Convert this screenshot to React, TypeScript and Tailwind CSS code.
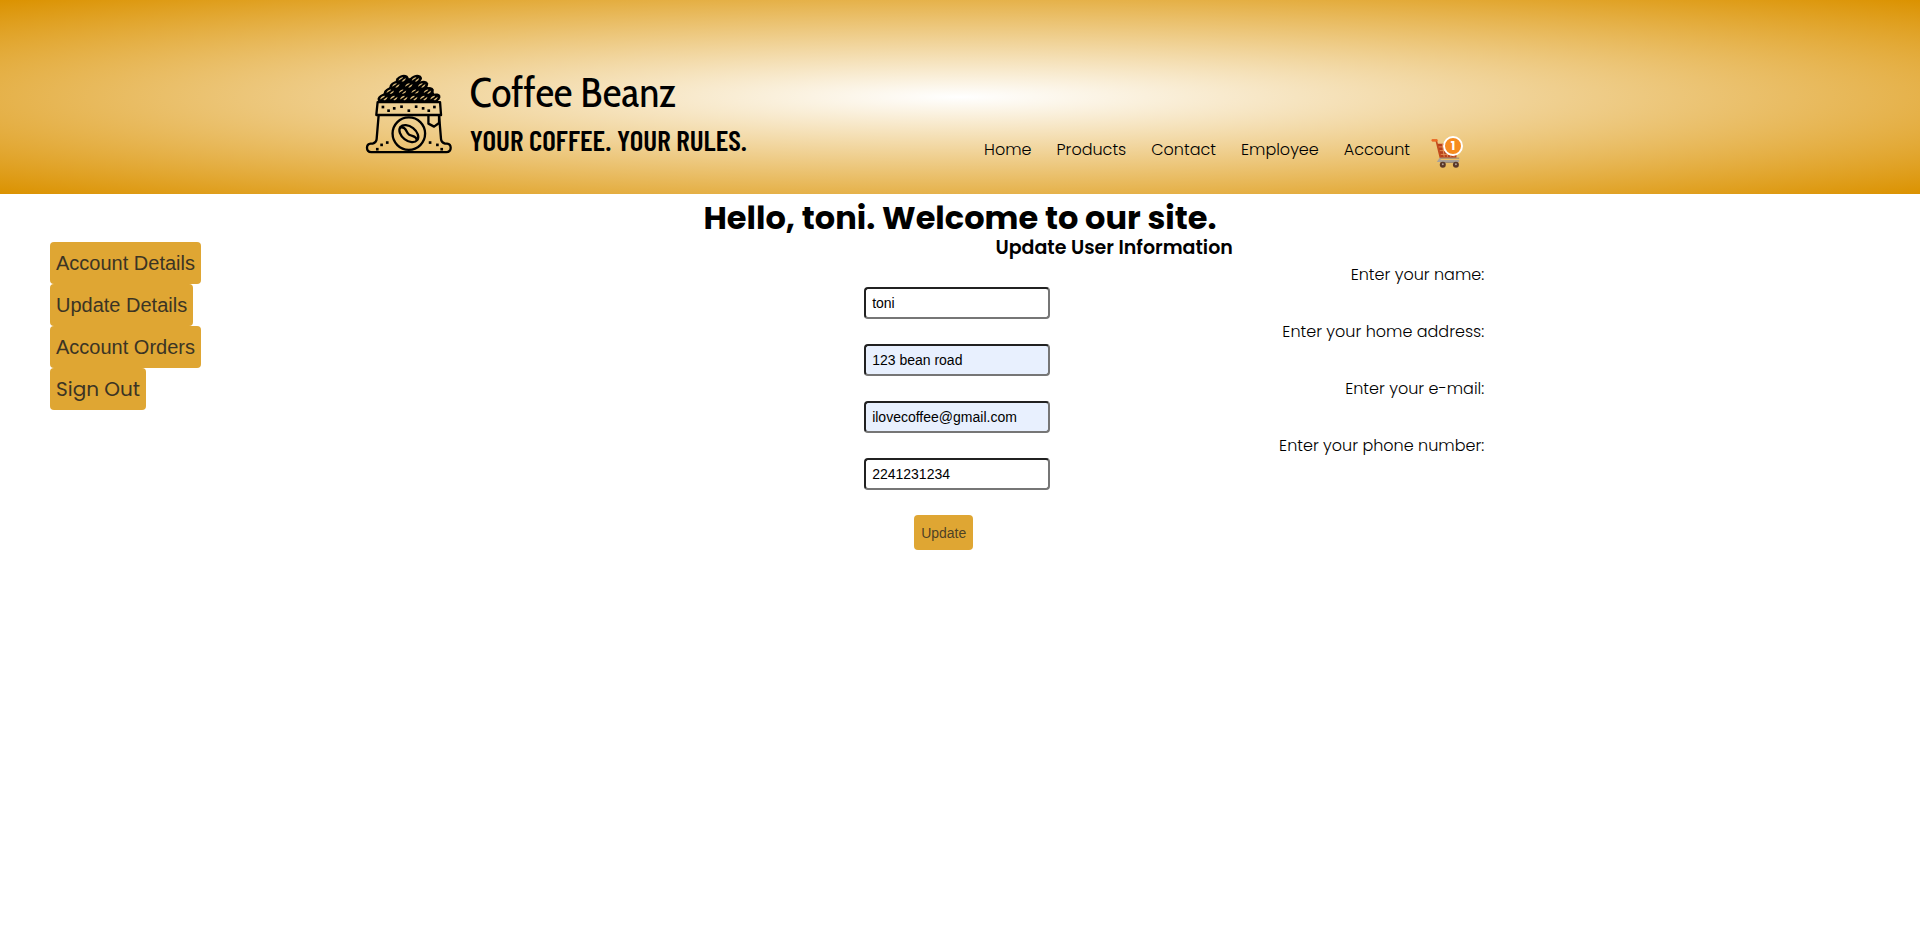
const beans: [number, number][] = [
  [130, 38], [170, 38],
  [111, 56], [150, 56], [189, 56],
  [94, 75], [131, 75], [169, 75], [206, 75],
  [75, 94], [105, 94], [135, 94], [165, 94], [195, 94], [226, 94],
];

const specks: [number, number][] = [
  [72, 121], [89, 132], [106, 125], [128, 120], [150, 132], [172, 120], [193, 125], [210, 132], [227, 121],
  [85, 228], [68, 235], [55, 248], [214, 228], [236, 235], [249, 248],
];

function CoffeeSack() {
  return (
    <svg viewBox="18 22 262 240" className="h-20 w-[87px] shrink-0" fill="none" stroke="#000" strokeWidth="7" strokeLinejoin="round" strokeLinecap="round" aria-hidden="true">
      <path d="M60 106L78 72L110 48L130 34H170L190 48L222 72L240 106Z" fill="#000" stroke="none" />
      {beans.map(([x, y]) => (
        <g key={`${x}-${y}`} transform={`translate(${x} ${y}) rotate(-20)`}>
          <ellipse rx="20" ry="13" fill="#000" stroke="none" />
          <path d="M-12 0Q-8 -7 3 -6Q7 -5 2 -3Q-5 -1 -12 0ZM-4 5Q3 1 12 0Q9 6 1 7Z" fill="#d9ba7b" stroke="none" />
        </g>
      ))}
      <path d="M56 106H244L247 145H52Z" />
      <path d="M59 147L53 218Q52 229 41 231H35Q24 232 24 244Q24 257 37 257H263Q276 257 276 244Q276 232 265 231H259Q248 229 247 218L241 147" />
      <path d="M209 147V171L226 180L241 169V147" />
      <circle cx="150" cy="201" r="49" />
      <g transform="translate(150 201) rotate(38)">
        <ellipse rx="32" ry="21" />
        <path d="M-31 0C-17 -13 -8 4 3 2S21 -9 31 0" />
      </g>
      {specks.map(([x, y]) => (
        <rect key={`${x}-${y}`} x={x - 4} y={y - 4} width="8" height="8" fill="#000" stroke="none" />
      ))}
    </svg>
  );
}

function CartIcon() {
  return (
    <svg viewBox="0 0 34 32" className="h-[30px] w-8" aria-hidden="true">
      <path d="M7 6H28L27 21H10Z" fill="#b8401a" />
      <path d="M8 9.500H27M9 13.500H27M10 17.500H27M12 6L14 20M16.500 6L17.500 20M21 6V20M25 6L24.500 20" stroke="#e89a5c" strokeWidth="0.900" />
      <path d="M1 2.500H5.500L10 21" fill="none" stroke="#c24a1c" strokeWidth="1.800" />
      <path d="M1.500 2.500H6" stroke="#ee6a22" strokeWidth="2.400" strokeLinecap="round" />
      <path d="M10 21.500L8 24.500H30" fill="none" stroke="#a9a29a" strokeWidth="2" />
      <path d="M10 21.500H30M10 26H28" stroke="#8d8177" strokeWidth="1" />
      <circle cx="12.500" cy="28.500" r="3.200" fill="#59382a" />
      <circle cx="26.500" cy="28.500" r="3.200" fill="#59382a" />
      <circle cx="12.500" cy="28" r="1" fill="#b3a39a" />
      <circle cx="26.500" cy="28" r="1" fill="#b3a39a" />
    </svg>
  );
}

const navItems = ["Home", "Products", "Contact", "Employee", "Account"];

const fields = [
  { id: "name", label: "Enter your name:", type: "text", value: "toni", filled: false },
  { id: "address", label: "Enter your home address:", type: "text", value: "123 bean road", filled: true },
  { id: "email", label: "Enter your e-mail:", type: "email", value: "ilovecoffee@gmail.com", filled: true },
  { id: "phone", label: "Enter your phone number:", type: "tel", value: "2241231234", filled: false },
];

const sideButton = "h-[42px] rounded bg-[#dfa633] px-1.5 text-xl text-[#3b3424]";

export default function App() {
  return (
    <div className="min-h-screen bg-white font-[Poppins,Inter,sans-serif] text-black">
      <header className="flex items-end justify-between bg-[radial-gradient(ellipse_at_center,#ffffff,#db9200)] pt-[74px] pr-[23.8%] pb-[26px] pl-[19%]">
        <a href="#home" className="mb-3.5 flex items-start gap-[18px]">
          <CoffeeSack />
          <span className="flex flex-col gap-5 whitespace-nowrap">
            <span className="font-['Cabin_Condensed',Dosis,Lato,sans-serif] text-[42px] leading-9">Coffee Beanz</span>
            <span className="font-['Barlow_Condensed','Roboto_Condensed',Roboto,sans-serif] text-[29px] leading-5 font-semibold">YOUR COFFEE. YOUR RULES.</span>
          </span>
        </a>
        <nav className="flex items-start gap-[25px] text-base font-light">
          {navItems.map((item) => (
            <a key={item} href={`#${item.toLowerCase()}`}>{item}</a>
          ))}
          <a href="#cart" aria-label="Cart" className="relative -ml-1">
            <CartIcon />
            <span className="absolute -top-0.5 right-0 flex size-5 items-center justify-center rounded-full border-2 border-white bg-[#f68b1f] text-xs font-bold text-white">1</span>
          </a>
        </nav>
      </header>
      <h1 className="pt-2 text-center text-[32px] leading-8 font-bold">Hello, toni. Welcome to our site.</h1>
      <main className="flex items-start justify-between pr-[22.7%] pl-[50px]">
        <aside className="flex flex-col items-start pt-2 font-['Liberation_Sans',Arial,sans-serif]">
          <button type="button" className={sideButton}>Account Details</button>
          <button type="button" className={sideButton}>Update Details</button>
          <button type="button" className={sideButton}>Account Orders</button>
          <a href="#sign-out" className={`${sideButton} flex items-center font-[Poppins,Inter,sans-serif]`}>Sign Out</a>
        </aside>
        <section className="w-[51.6%]">
          <h3 className="text-center text-[19px] leading-7 font-semibold">Update User Information</h3>
          <form>
            {fields.map((f) => (
              <div key={f.id}>
                <label htmlFor={f.id} className="block text-right text-base leading-[25px] font-light">{f.label}</label>
                <input
                  id={f.id}
                  type={f.type}
                  defaultValue={f.value}
                  className={`ml-[120px] block h-8 w-[186px] rounded border-2 border-[#767676] px-1.5 font-['Liberation_Sans',Arial,sans-serif] text-sm [border-style:inset] ${f.filled ? "bg-[#e8f0fe]" : "bg-white"}`}
                />
              </div>
            ))}
            <button type="submit" className="mt-[25px] ml-[170px] h-[35px] rounded bg-[#dfa633] px-[7px] font-['Liberation_Sans',Arial,sans-serif] text-sm text-[#3b3424]/90">Update</button>
          </form>
        </section>
      </main>
    </div>
  );
}
